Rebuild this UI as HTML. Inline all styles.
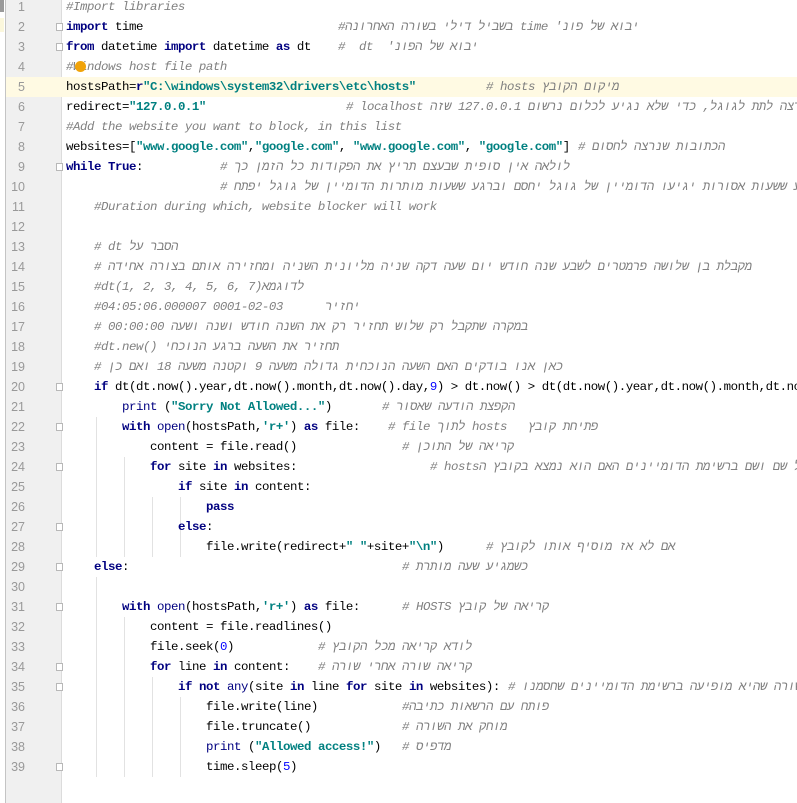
<!DOCTYPE html>
<html><head><meta charset="utf-8"><style>
html,body{margin:0;padding:0}
body{width:797px;height:803px;position:relative;overflow:hidden;background:#fff;font-family:"Liberation Mono","DejaVu Sans Mono",monospace;font-size:12.4px;letter-spacing:-0.44px}
.g{position:absolute;left:5px;top:0;width:55px;height:803px;background:#f0f0f0;border-left:1px solid #c4c4c4;border-right:1px solid #dcdcdc}
.n{position:absolute;left:5px;width:20px;text-align:right;color:#999;font-family:"Liberation Sans","DejaVu Sans",sans-serif;font-size:12.5px;letter-spacing:0;height:20px;line-height:20px}
.l{position:absolute;height:20px;line-height:20px;white-space:pre;color:#000}
.c{position:absolute;height:20px;line-height:20px;white-space:pre;color:#808080;font-style:italic}
.r{direction:rtl;unicode-bidi:isolate}
.k{color:#000080;font-weight:bold}
.s{color:#008080;font-weight:bold}
.b{color:#000080}
.d{color:#0000ff}
.hl{position:absolute;left:6px;width:791px;top:77px;height:20px;background:#fffae3}
.ig{position:absolute;width:1px;background:#e2e2e2}
.f{position:absolute;left:56px;width:7px;height:8px;border:1px solid #b8b8b8;background:#fff;box-sizing:border-box}
</style></head><body>
<div class="g"></div>
<div class="hl"></div>
<div style="position:absolute;left:0;top:0;width:4px;height:12px;background:#9a9a9a"></div>
<div style="position:absolute;left:0;top:18px;width:4px;height:14px;background:#fbf7dc"></div>

<div class="ig" style="left:96px;top:417px;height:140px"></div>
<div class="ig" style="left:124px;top:457px;height:100px"></div>
<div class="ig" style="left:152px;top:497px;height:60px"></div>
<div class="ig" style="left:180px;top:497px;height:60px"></div>
<div class="ig" style="left:96px;top:577px;height:200px"></div>
<div class="ig" style="left:124px;top:617px;height:160px"></div>
<div class="ig" style="left:152px;top:677px;height:100px"></div>
<div class="ig" style="left:180px;top:697px;height:80px"></div>

<div class="f" style="top:23px"></div><div class="f" style="top:43px"></div>
<div class="f" style="top:163px"></div><div class="f" style="top:383px"></div>
<div class="f" style="top:423px"></div><div class="f" style="top:463px"></div>
<div class="f" style="top:523px"></div><div class="f" style="top:563px"></div>
<div class="f" style="top:603px"></div><div class="f" style="top:663px"></div>
<div class="f" style="top:683px"></div><div class="f" style="top:763px"></div>

<div class="n" style="top:-3px">1</div><div class="n" style="top:17px">2</div><div class="n" style="top:37px">3</div><div class="n" style="top:57px">4</div><div class="n" style="top:77px">5</div><div class="n" style="top:97px">6</div><div class="n" style="top:117px">7</div><div class="n" style="top:137px">8</div><div class="n" style="top:157px">9</div><div class="n" style="top:177px">10</div><div class="n" style="top:197px">11</div><div class="n" style="top:217px">12</div><div class="n" style="top:237px">13</div><div class="n" style="top:257px">14</div><div class="n" style="top:277px">15</div><div class="n" style="top:297px">16</div><div class="n" style="top:317px">17</div><div class="n" style="top:337px">18</div><div class="n" style="top:357px">19</div><div class="n" style="top:377px">20</div><div class="n" style="top:397px">21</div><div class="n" style="top:417px">22</div><div class="n" style="top:437px">23</div><div class="n" style="top:457px">24</div><div class="n" style="top:477px">25</div><div class="n" style="top:497px">26</div><div class="n" style="top:517px">27</div><div class="n" style="top:537px">28</div><div class="n" style="top:557px">29</div><div class="n" style="top:577px">30</div><div class="n" style="top:597px">31</div><div class="n" style="top:617px">32</div><div class="n" style="top:637px">33</div><div class="n" style="top:657px">34</div><div class="n" style="top:677px">35</div><div class="n" style="top:697px">36</div><div class="n" style="top:717px">37</div><div class="n" style="top:737px">38</div><div class="n" style="top:757px">39</div>

<div class="c" style="left:66px;top:-3px">#Import libraries</div>
<div class="l" style="left:66px;top:17px"><span class="k">import</span> time</div>
<div class="c r" style="left:338px;top:17px">יבוא של פונ' time בשביל דילי בשורה האחרונה#</div>
<div class="l" style="left:66px;top:37px"><span class="k">from</span> datetime <span class="k">import</span> datetime <span class="k">as</span> dt</div>
<div class="c r" style="left:338px;top:37px">יבוא של הפונ'  dt  #</div>
<div class="c" style="left:66px;top:57px">#Windows host file path</div>
<div style="position:absolute;left:75px;top:61px;width:11px;height:11px;border-radius:50%;background:#f0a30a"></div>
<div class="l" style="left:66px;top:77px">hostsPath=<span class="k">r</span><span class="s">"C:\windows\system32\drivers\etc\hosts"</span></div>
<div class="c r" style="left:486px;top:77px">מיקום הקובץ hosts #</div>
<div class="l" style="left:66px;top:97px">redirect=<span class="s">"127.0.0.1"</span></div>
<div class="c r" style="left:346px;top:97px">ב שנרצה לתת לגוגל, כדי שלא נגיע לכלום נרשום 127.0.0.1 שזה localhost #</div>
<div class="c" style="left:66px;top:117px">#Add the website you want to block, in this list</div>
<div class="l" style="left:66px;top:137px">websites=[<span class="s">"www.google.com"</span>,<span class="s">"google.com"</span>, <span class="s">"www.google.com"</span>, <span class="s">"google.com"</span>]</div>
<div class="c r" style="left:578px;top:137px">הכתובות שנרצה לחסום #</div>
<div class="l" style="left:66px;top:157px"><span class="k">while</span> <span class="k">True</span>:</div>
<div class="c r" style="left:220px;top:157px">לולאה אין סופית שבעצם תריץ את הפקודות כל הזמן כך #</div>
<div class="c r" style="left:220px;top:177px">שברגע ששעות אסורות יגיעו הדומיין של גוגל יחסם וברגע ששעות מותרות הדומיין של גוגל יפתח #</div>
<div class="c" style="left:94px;top:197px">#Duration during which, website blocker will work</div>
<div class="c r" style="left:94px;top:237px">הסבר על dt #</div>
<div class="c r" style="left:94px;top:257px">מקבלת בן שלושה פרמטרים לשבע שנה חודש יום שעה דקה שניה מליונית השניה ומחזירה אותם בצורה אחידה #</div>
<div class="c" style="left:94px;top:277px">#dt(1, 2, 3, 4, 5, 6, 7)לדוגמא</div>
<div class="c" style="left:94px;top:297px">#04:05:06.000007 0001-02-03      יחזיר</div>
<div class="c r" style="left:94px;top:317px">במקרה שתקבל רק שלוש תחזיר רק את השנה חודש ושנה ושעה 00:00:00 #</div>
<div class="c" style="left:94px;top:337px">#dt.new() <span class="r">תחזיר את השעה ברגע הנוכחי</span></div>
<div class="c r" style="left:94px;top:357px">כאן אנו בודקים האם השעה הנוכחית גדולה משעה 9 וקטנה משעה 18 ואם כן #</div>
<div class="l" style="left:94px;top:377px"><span class="k">if</span> dt(dt.now().year,dt.now().month,dt.now().day,<span class="d">9</span>) &gt; dt.now() &gt; dt(dt.now().year,dt.now().month,dt.no</div>
<div class="l" style="left:122px;top:397px"><span class="b">print</span> (<span class="s">"Sorry Not Allowed..."</span>)</div>
<div class="c r" style="left:382px;top:397px">הקפצת הודעה שאסור #</div>
<div class="l" style="left:122px;top:417px"><span class="k">with</span> <span class="b">open</span>(hostsPath,<span class="s">'r+'</span>) <span class="k">as</span> file:</div>
<div class="c r" style="left:388px;top:417px">פתיחת קובץ   hosts לתוך file #</div>
<div class="l" style="left:150px;top:437px">content = file.read()</div>
<div class="c r" style="left:402px;top:437px">קריאה של התוכן #</div>
<div class="l" style="left:150px;top:457px"><span class="k">for</span> site <span class="k">in</span> websites:</div>
<div class="c r" style="left:430px;top:457px">ל כל שם ושם ברשימת הדומיינים האם הוא נמצא בקובץ הhosts #</div>
<div class="l" style="left:178px;top:477px"><span class="k">if</span> site <span class="k">in</span> content:</div>
<div class="l" style="left:206px;top:497px"><span class="k">pass</span></div>
<div class="l" style="left:178px;top:517px"><span class="k">else</span>:</div>
<div class="l" style="left:206px;top:537px">file.write(redirect+<span class="s">" "</span>+site+<span class="s">"\n"</span>)</div>
<div class="c r" style="left:486px;top:537px">אם לא אז מוסיף אותו לקובץ #</div>
<div class="l" style="left:94px;top:557px"><span class="k">else</span>:</div>
<div class="c r" style="left:402px;top:557px">כשמגיע שעה מותרת #</div>
<div class="l" style="left:122px;top:597px"><span class="k">with</span> <span class="b">open</span>(hostsPath,<span class="s">'r+'</span>) <span class="k">as</span> file:</div>
<div class="c r" style="left:402px;top:597px">קריאה של קובץ HOSTS #</div>
<div class="l" style="left:150px;top:617px">content = file.readlines()</div>
<div class="l" style="left:150px;top:637px">file.seek(<span class="d">0</span>)</div>
<div class="c r" style="left:318px;top:637px">לודא קריאה מכל הקובץ #</div>
<div class="l" style="left:150px;top:657px"><span class="k">for</span> line <span class="k">in</span> content:</div>
<div class="c r" style="left:318px;top:657px">קריאה שורה אחרי שורה #</div>
<div class="l" style="left:178px;top:677px"><span class="k">if not</span> <span class="b">any</span>(site <span class="k">in</span> line <span class="k">for</span> site <span class="k">in</span> websites):</div>
<div class="c r" style="left:508px;top:677px">פש שורה שהיא מופיעה ברשימת הדומיינים שחסמנו #</div>
<div class="l" style="left:206px;top:697px">file.write(line)</div>
<div class="c r" style="left:402px;top:697px">פותח עם הרשאות כתיבה#</div>
<div class="l" style="left:206px;top:717px">file.truncate()</div>
<div class="c r" style="left:402px;top:717px">מוחק את השורה #</div>
<div class="l" style="left:206px;top:737px"><span class="b">print</span> (<span class="s">"Allowed access!"</span>)</div>
<div class="c r" style="left:402px;top:737px">מדפיס #</div>
<div class="l" style="left:206px;top:757px">time.sleep(<span class="d">5</span>)</div>
</body></html>
